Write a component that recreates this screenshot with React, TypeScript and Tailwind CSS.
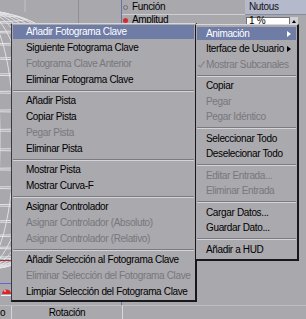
import React from 'react';

type Entry = { label: string; disabled?: boolean; active?: boolean; arrow?: boolean; check?: boolean } | 'sep';

const leftItems: Entry[] = [
  { label: 'Añadir Fotograma Clave', active: true },
  { label: 'Siguiente Fotograma Clave' },
  { label: 'Fotograma Clave Anterior', disabled: true },
  { label: 'Eliminar Fotograma Clave' },
  'sep',
  { label: 'Añadir Pista' },
  { label: 'Copiar Pista' },
  { label: 'Pegar Pista', disabled: true },
  { label: 'Eliminar Pista' },
  'sep',
  { label: 'Mostrar Pista' },
  { label: 'Mostrar Curva-F' },
  'sep',
  { label: 'Asignar Controlador' },
  { label: 'Asignar Controlador (Absoluto)', disabled: true },
  { label: 'Asignar Controlador (Relativo)', disabled: true },
  'sep',
  { label: 'Añadir Selección al Fotograma Clave' },
  { label: 'Eliminar Selección del Fotograma Clave', disabled: true },
  { label: 'Limpiar Selección del Fotograma Clave' },
];

const subItems: Entry[] = [
  { label: 'Animación', active: true, arrow: true },
  { label: 'Iterface de Usuario', arrow: true },
  { label: 'Mostrar Subcanales', disabled: true, check: true },
  'sep',
  { label: 'Copiar' },
  { label: 'Pegar', disabled: true },
  { label: 'Pegar Idéntico', disabled: true },
  'sep',
  { label: 'Seleccionar Todo' },
  { label: 'Deselecionar Todo' },
  'sep',
  { label: 'Editar Entrada...', disabled: true },
  { label: 'Eliminar Entrada', disabled: true },
  'sep',
  { label: 'Cargar Datos...' },
  { label: 'Guardar Dato...' },
  'sep',
  { label: 'Añadir a HUD' },
];

const Separator: React.FC<{ sub?: boolean }> = ({ sub }) => (
  <div className={`flex items-center ${sub ? 'h-[6px]' : 'h-[5px]'}`}>
    <div className="h-[2px] w-full border-t border-b border-t-[#7c7b80] border-b-[#d4d3d7]" />
  </div>
);

const MenuRow: React.FC<{ entry: Exclude<Entry, 'sep'>; sub?: boolean }> = ({ entry, sub }) => {
  const tone = entry.active ? 'bg-[#6e7ca6] text-white' : entry.disabled ? 'text-[#78777c]' : 'text-black';
  return (
    <div className={`flex items-center ${sub ? 'h-[15.5px]' : 'h-[16px]'}`}>
      <div
        className={`relative flex w-full items-center whitespace-nowrap ${sub ? 'h-[13px] pl-[9px] pr-[5px]' : 'h-[14px] pl-[13px]'} ${tone}`}
      >
        {entry.check && (
          <svg className="absolute left-[1px] top-[3px] h-[7px] w-[7px]" viewBox="0 0 7 7">
            <path d="M0.5 4 L2.5 6 L6.5 0.5" fill="none" stroke="#8a898e" strokeWidth={1.3} />
          </svg>
        )}
        <span className="flex-1">{entry.label}</span>
        {entry.arrow && (
          <span
            className={`h-0 w-0 border-y-[3.5px] border-l-[4px] border-y-transparent ${entry.active ? 'border-l-white' : 'border-l-black'}`}
          />
        )}
      </div>
    </div>
  );
};

// viewport behind the menus: a wireframe ball and a few timeline marks
const Wireframe: React.FC = () => {
  const cx = -20;
  const cy = 140;
  const r = 130;
  const lats = [-1.35, -1.2, -1.05, -0.9, -0.75, -0.6, -0.45, -0.3, -0.15, 0, 0.15, 0.3, 0.45, 0.6, 0.75, 0.9, 1.05, 1.2, 1.35];
  const longs = [8, 20, 34, 48, 62, 76, 90, 104, 118, 126];
  return (
    <svg className="absolute inset-0" width={122} height={305} viewBox="0 0 122 305">
      <defs>
        <clipPath id="ball">
          <circle cx={cx} cy={cy} r={r} />
        </clipPath>
      </defs>
      <line x1={25} y1={0} x2={25} y2={12} stroke="#c4c3c8" strokeWidth={1} />
      <line x1={78.5} y1={0} x2={78.5} y2={24} stroke="#8f8e93" strokeWidth={1} />
      <g clipPath="url(#ball)" stroke="#e6e6ec" strokeWidth={0.9} fill="none">
        {lats.map((a) => (
          <ellipse key={a} cx={cx} cy={cy + r * Math.sin(a)} rx={r * Math.cos(a)} ry={9 * Math.cos(a)} />
        ))}
        {longs.map((w) => (
          <ellipse key={w} cx={cx} cy={cy} rx={w} ry={r} />
        ))}
        <circle cx={cx} cy={cy} r={r - 0.5} />
      </g>
      <line x1={0} y1={260.5} x2={12} y2={260.5} stroke="#a8323a" strokeWidth={1} />
      <line x1={0} y1={283.5} x2={12} y2={283.5} stroke="#6464d8" strokeWidth={1} />
      <path d="M2 294 A4.5 4.5 0 0 1 11 294 Z" fill="#d8262c" />
      <circle cx={5} cy={291} r={1} fill="#ffb0b0" />
      <line x1={1} y1={295.5} x2={12} y2={295.5} stroke="#f2f2f2" strokeWidth={1} />
    </svg>
  );
};

export default function App() {
  return (
    <div
      className="relative flex h-[319px] w-[306px] flex-col overflow-hidden bg-[#a9a8ac] text-[10px] leading-none tracking-[-0.35px] text-black"
      style={{ fontFamily: '"Liberation Sans", Arial, sans-serif' }}
    >
      <div className="flex h-[305px]">
        <div className="relative w-[122px] border-r border-[#6d6ea3]">
          <Wireframe />
        </div>
        <div className="flex flex-1 flex-col">
          <div className="flex h-[15px] items-center border-b border-[#cfced3]">
            <span className="ml-[1px] h-[5px] w-[5px] rounded-full border border-[#6f6e74]" />
            <span className="ml-[4px] flex-1">Función</span>
            <div className="flex h-[15px] w-[61px] items-center border-b border-[#868aa0] bg-[#b4b9cb] pl-[4px] text-[#141418]">
              Nutous
            </div>
          </div>
          <div className="flex h-[10px] items-center">
            <span className="ml-[1px] h-[5px] w-[5px] rounded-full bg-[#d42c2c]" />
            <span className="ml-[4px] flex-1">Amplitud</span>
            <div className="mt-[2px] flex h-[8px] w-[44px] items-center border border-[#707070] bg-white pl-[2px]">1 %</div>
            <div className="mt-[2px] flex h-[8px] w-[8px] items-center justify-center bg-[#d0d0d4]">
              <span className="h-0 w-0 border-x-[2.5px] border-b-[3px] border-x-transparent border-b-black" />
            </div>
            <div className="w-[8px]" />
          </div>
        </div>
      </div>
      <div className="flex h-[14px] items-center border-t border-[#bdbcc0]">
        <div className="flex h-full w-[12px] items-center border-r border-[#d6d5d9]">o</div>
        <div className="flex h-full w-[111px] items-center justify-center border-r border-[#d6d5d9]">Rotación</div>
        <div className="flex-1" />
      </div>

      <div className="absolute left-[11px] top-[23px] w-[186px] border-t border-l border-r-2 border-b-2 border-t-[#d8d7db] border-l-[#3a393e] border-r-[#18181a] border-b-[#18181a] bg-[#aaa9ad] px-[1px]">
        {leftItems.map((e, i) => (e === 'sep' ? <Separator key={i} /> : <MenuRow key={i} entry={e} />))}
      </div>

      <div className="absolute left-[195px] top-[24px] w-[104px] border-t border-l border-r-2 border-b-2 border-t-[#d8d7db] border-l-[#18181a] border-r-[#18181a] border-b-[#18181a] bg-[#aaa9ad] px-[1px] py-[1px]">
        {subItems.map((e, i) => (e === 'sep' ? <Separator key={i} sub /> : <MenuRow key={i} entry={e} sub />))}
      </div>
    </div>
  );
}
